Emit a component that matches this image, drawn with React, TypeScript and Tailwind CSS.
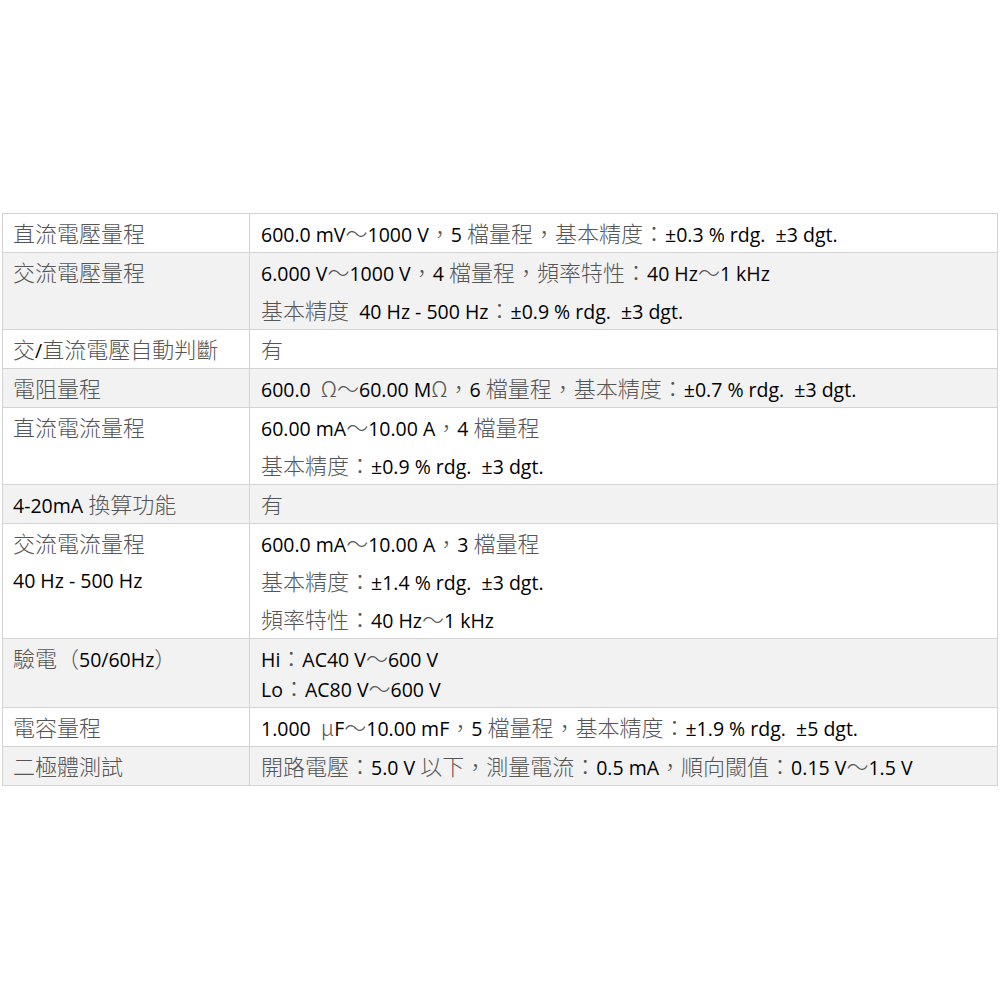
import React from "react";

// runs of CJK / fullwidth chars get the grey CJK font, the rest stays latin black
const CJK = /([\u3000-\u9fff\uff00-\uffef\u03a9\u03bc]+)/;

function Mixed({ text }: { text: string }) {
  return (
    <>
      {text.split(CJK).map((part, i) =>
        part === "" ? null : CJK.test(part) ? (
          <span
            key={i}
            className="font-['Noto_Sans_CJK_TC','Noto_Sans_CJK_JP',sans-serif] text-[22px] font-light text-[#555555]"
          >
            {part}
          </span>
        ) : (
          <span key={i}>{part}</span>
        )
      )}
    </>
  );
}

type Row = { label: string[]; value: string[]; tight?: boolean };

const rows: Row[] = [
  { label: ["直流電壓量程"], value: ["600.0 mV～1000 V，5 檔量程，基本精度：±0.3 % rdg.  ±3 dgt."] },
  {
    label: ["交流電壓量程"],
    value: ["6.000 V～1000 V，4 檔量程，頻率特性：40 Hz～1 kHz", "基本精度  40 Hz - 500 Hz：±0.9 % rdg.  ±3 dgt."],
  },
  { label: ["交/直流電壓自動判斷"], value: ["有"] },
  { label: ["電阻量程"], value: ["600.0  Ω～60.00 MΩ，6 檔量程，基本精度：±0.7 % rdg.  ±3 dgt."] },
  { label: ["直流電流量程"], value: ["60.00 mA～10.00 A，4 檔量程", "基本精度：±0.9 % rdg.  ±3 dgt."] },
  { label: ["4-20mA 換算功能"], value: ["有"] },
  {
    label: ["交流電流量程", "40 Hz - 500 Hz"],
    value: ["600.0 mA～10.00 A，3 檔量程", "基本精度：±1.4 % rdg.  ±3 dgt.", "頻率特性：40 Hz～1 kHz"],
  },
  { label: ["驗電（50/60Hz）"], value: ["Hi：AC40 V～600 V", "Lo：AC80 V～600 V"], tight: true },
  { label: ["電容量程"], value: ["1.000  μF～10.00 mF，5 檔量程，基本精度：±1.9 % rdg.  ±5 dgt."] },
  { label: ["二極體測試"], value: ["開路電壓：5.0 V 以下，測量電流：0.5 mA，順向閾值：0.15 V～1.5 V"] },
];

function Lines({ lines, tight }: { lines: string[]; tight?: boolean }) {
  return (
    <div className={tight ? "flex flex-col py-[4px]" : "flex flex-col"}>
      {lines.map((l, j) => (
        <div
          key={j}
          className={`flex items-center whitespace-pre ${tight ? "h-[30px]" : "h-[38px]"}`}
        >
          <span className="leading-none">
            <Mixed text={l} />
          </span>
        </div>
      ))}
    </div>
  );
}

export default function App() {
  return (
    <div className="flex h-[1000px] w-[1000px] flex-col bg-white pt-[213px] pl-[2px] font-['Open_Sans',sans-serif] text-[19.5px] text-black">
      <table className="w-[996px] table-fixed border-collapse">
        <colgroup>
          <col className="w-[247px]" />
          <col />
        </colgroup>
        <tbody>
          {rows.map((row, i) => (
            <tr key={i} className={i % 2 === 0 ? "bg-white" : "bg-[#f2f2f2]"}>
              <td className="border border-[#d3d3d3] p-0 pl-[10px] align-top">
                <Lines lines={row.label} tight={row.tight} />
              </td>
              <td className="border border-[#d3d3d3] p-0 pl-[11px] align-top">
                <Lines lines={row.value} tight={row.tight} />
              </td>
            </tr>
          ))}
        </tbody>
      </table>
    </div>
  );
}
